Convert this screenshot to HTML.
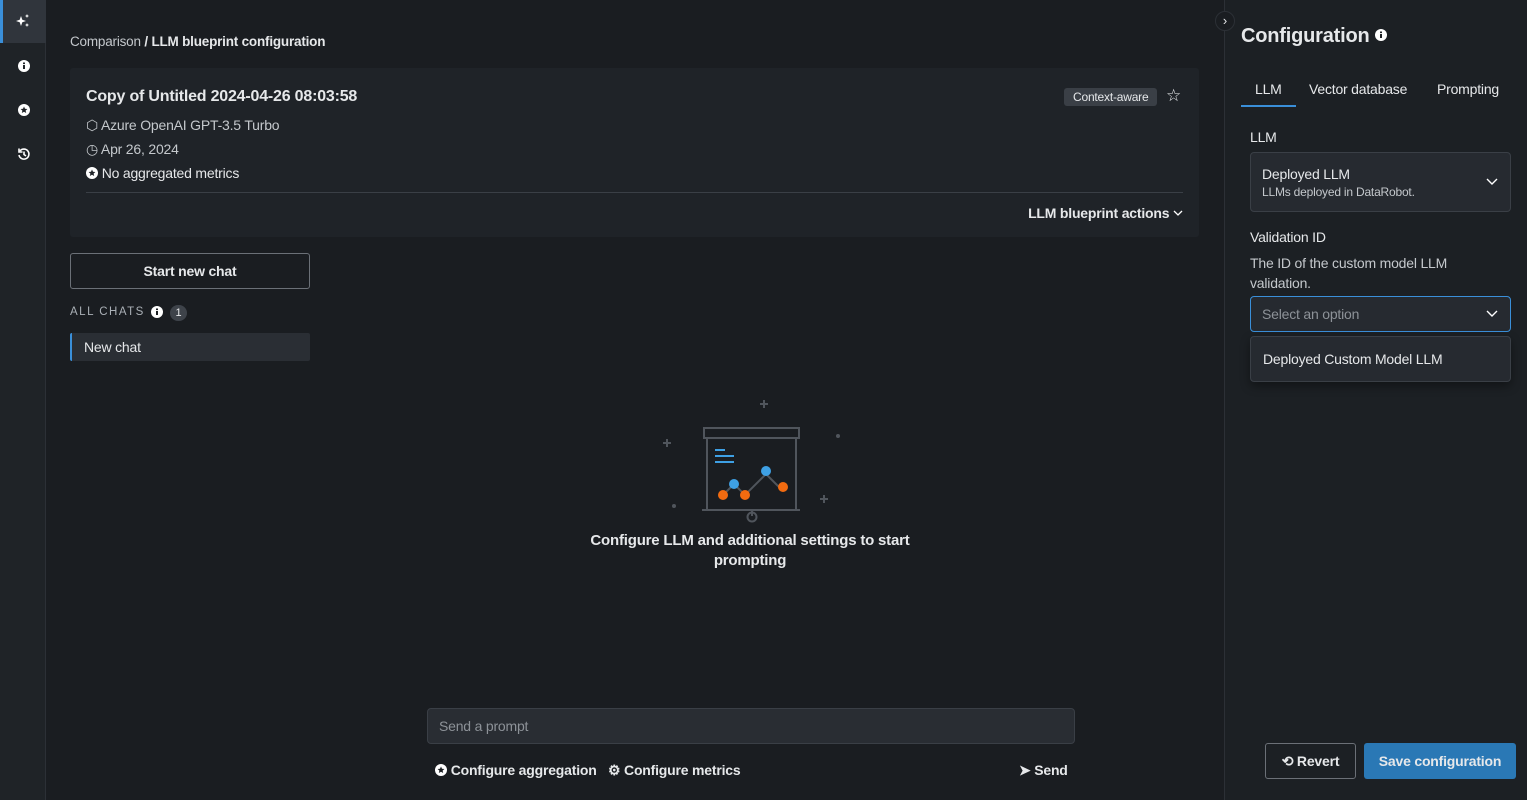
<!DOCTYPE html>
<html><head><style>
*{box-sizing:border-box;margin:0;padding:0}
body{width:1527px;height:800px;background:#1a1d21;font-family:"Liberation Sans",sans-serif;color:#e6e8ea;position:relative;overflow:hidden;font-size:14px;letter-spacing:-0.2px}
.abs{position:absolute}
.side{left:0;top:0;width:46px;height:800px;background:#1f2327;border-right:1px solid #2c3036}
.side .act{position:absolute;left:0;top:0;width:46px;height:43px;background:#30353c;border-left:3px solid #3a8fd9}
.b{font-weight:bold}
.card{left:70px;top:68px;width:1129px;height:169px;background:#1f2328;border-radius:3px}
.muted{color:#c4c8cc}
.right{left:1224px;top:0;width:303px;height:800px;background:#1c2024;border-left:1px solid #2c3036}
.box{border:1px solid #3a3f46;border-radius:4px;background:#262a30}
.chev{position:absolute;right:12px;top:50%;margin-top:-4px}
</style></head><body>
<div class="abs side"><div class="act"></div>
<svg class="abs" style="left:16px;top:14px" width="15" height="15" viewBox="0 0 15 15" fill="#fff"><path d="M5 2l1.3 3.7L10 7 6.3 8.3 5 12 3.7 8.3 0 7l3.7-1.3z"/><path d="M11 0l.6 1.4L13 2l-1.4.6L11 4l-.6-1.4L9 2l1.4-.6zM11 9l.6 1.4L13 11l-1.4.6L11 13l-.6-1.4L9 11l1.4-.6z"/></svg>
<svg class="abs" style="left:18px;top:60px" width="12" height="12"><circle cx="6" cy="6" r="6" fill="#fff"/><rect x="5" y="5" width="2" height="4" fill="#1f2327"/><rect x="5" y="2.5" width="2" height="1.6" fill="#1f2327"/></svg>
<svg class="abs" style="left:18px;top:104px" width="12" height="12"><circle cx="6" cy="6" r="6" fill="#fff"/><path d="M6 2.5l1 2.3 2.4.2-1.8 1.6.6 2.4L6 7.7 3.8 9l.6-2.4L2.6 5l2.4-.2z" fill="#1f2327"/></svg>
<svg class="abs" style="left:17px;top:147px" width="14" height="14" fill="none" stroke="#fff" stroke-width="1.6"><path d="M3 4a5 5 0 1 1-1 4"/><path d="M2 1.5v3.5h3.5"/><path d="M7 4.5v3l2 1.5"/></svg>
</div>

<div class="abs" style="left:70px;top:34px;font-size:13.5px"><span class="muted">Comparison</span> <span class="b">/ LLM blueprint configuration</span></div>

<div class="abs card">
<div class="abs b" style="left:16px;top:20px;font-size:16px">Copy of Untitled 2024-04-26 08:03:58</div>
<div class="abs muted" style="left:16px;top:49px">⬡ Azure OpenAI GPT-3.5 Turbo</div>
<div class="abs muted" style="left:16px;top:73px">◷ Apr 26, 2024</div>
<div class="abs" style="left:16px;top:97px"><svg width="12" height="12" style="vertical-align:-1px"><circle cx="6" cy="6" r="6" fill="#fff"/><path d="M6 2.5l1 2.3 2.4.2-1.8 1.6.6 2.4L6 7.7 3.8 9l.6-2.4L2.6 5l2.4-.2z" fill="#1f2328"/></svg> No aggregated metrics</div>
<div class="abs" style="left:994px;top:20px;background:#3a3f46;border-radius:3px;padding:2px 9px;font-size:12px">Context-aware</div>
<div class="abs" style="left:1096px;top:18px;font-size:17px">☆</div>
<div class="abs" style="left:16px;top:124px;width:1097px;height:1px;background:#3a3f46"></div>
<div class="abs b" style="right:16px;top:137px">LLM blueprint actions <svg width="10" height="6" style="vertical-align:2px"><path d="M1 1l4 4 4-4" fill="none" stroke="#fff" stroke-width="1.3"/></svg></div>
</div>

<div class="abs b" style="left:70px;top:253px;width:240px;height:36px;border:1px solid #6b7077;border-radius:3px;text-align:center;line-height:34px">Start new chat</div>
<div class="abs" style="left:70px;top:306px;font-size:11.5px;letter-spacing:1.5px;color:#aab0b6">ALL CHATS</div>
<svg class="abs" style="left:151px;top:306px" width="12" height="12"><circle cx="6" cy="6" r="6" fill="#fff"/><rect x="5" y="5" width="2" height="4" fill="#1a1d21"/><rect x="5" y="2.5" width="2" height="1.6" fill="#1a1d21"/></svg>
<div class="abs" style="left:170px;top:305px;width:17px;height:16px;border-radius:8px;background:#3e434a;font-size:11px;text-align:center;line-height:16px">1</div>
<div class="abs" style="left:70px;top:333px;width:240px;height:28px;background:#2a2e34;border-left:2px solid #3a8fd9;border-radius:2px;padding-left:12px;line-height:28px">New chat</div>

<svg class="abs" style="left:655px;top:395px" width="190" height="130">
<g fill="#50555c"><path d="M105 9h8M109 5v8" stroke="#50555c" stroke-width="2"/><path d="M8 48h8M12 44v8" stroke="#50555c" stroke-width="2"/><path d="M165 104h8M169 100v8" stroke="#50555c" stroke-width="2"/><circle cx="183" cy="41" r="2"/><circle cx="19" cy="111" r="2"/></g>
<g fill="none" stroke="#50555c" stroke-width="2"><rect x="49" y="33" width="95" height="10"/><path d="M52 43v72M141 43v72M47 115h98M97 115v6"/><circle cx="97" cy="122" r="4.5"/><path d="M68 100L79 89 90 100 111 79 128 96"/></g>
<g stroke="#3ea0e4" stroke-width="2"><path d="M60 55h10M60 61h19M60 67h19"/></g>
<circle cx="79" cy="89" r="5" fill="#3ea0e4"/><circle cx="111" cy="76" r="5" fill="#3ea0e4"/>
<circle cx="68" cy="100" r="5" fill="#f26b10"/><circle cx="90" cy="100" r="5" fill="#f26b10"/><circle cx="128" cy="92" r="5" fill="#f26b10"/>
</svg>
<div class="abs b" style="left:570px;top:531px;width:360px;text-align:center;font-size:15px;line-height:20px">Configure LLM and additional settings to start prompting</div>

<div class="abs box" style="left:427px;top:708px;width:648px;height:36px;background:#292d33;padding-left:11px;line-height:34px;color:#8d9298">Send a prompt</div>
<div class="abs b" style="left:435px;top:762px"><svg width="12" height="12" style="vertical-align:-1px"><circle cx="6" cy="6" r="6" fill="#fff"/><path d="M6 2.5l1 2.3 2.4.2-1.8 1.6.6 2.4L6 7.7 3.8 9l.6-2.4L2.6 5l2.4-.2z" fill="#1a1d21"/></svg> Configure aggregation</div>
<div class="abs b" style="left:608px;top:762px">⚙ Configure metrics</div>
<div class="abs b" style="left:1019px;top:762px">➤ Send</div>

<div class="abs right">
<div class="abs" style="left:-10px;top:11px;width:20px;height:20px;border-radius:50%;background:#1a1d21;border:1px solid #2c3036;text-align:center;line-height:17px;font-size:13px">›</div>
<div class="abs b" style="left:16px;top:25px;font-size:20px">Configuration <svg width="12" height="12" style="vertical-align:1px"><circle cx="6" cy="6" r="6" fill="#fff"/><rect x="5" y="5" width="2" height="4" fill="#1c2024"/><rect x="5" y="2.5" width="2" height="1.6" fill="#1c2024"/></svg></div>
<div class="abs" style="left:30px;top:81px">LLM</div>
<div class="abs" style="left:16px;top:105px;width:55px;height:2px;background:#3a8fd9"></div>
<div class="abs" style="left:84px;top:81px">Vector database</div>
<div class="abs" style="left:212px;top:81px">Prompting</div>
<div class="abs" style="left:25px;top:129px">LLM</div>
<div class="abs box" style="left:25px;top:152px;width:261px;height:60px">
<div class="abs" style="left:11px;top:13px">Deployed LLM</div>
<div class="abs muted" style="left:11px;top:32px;font-size:12px">LLMs deployed in DataRobot.</div>
<svg class="chev" width="12" height="7"><path d="M1 1l5 5 5-5" fill="none" stroke="#fff" stroke-width="1.4"/></svg></div>
<div class="abs" style="left:25px;top:229px">Validation ID</div>
<div class="abs muted" style="left:25px;top:253px;width:250px;line-height:20px">The ID of the custom model LLM validation.</div>
<div class="abs box" style="left:25px;top:296px;width:261px;height:36px;border-color:#3a8fd9;padding-left:11px;line-height:34px;color:#8d9298">Select an option<svg class="chev" width="12" height="7"><path d="M1 1l5 5 5-5" fill="none" stroke="#fff" stroke-width="1.4"/></svg></div>
<div class="abs box" style="left:25px;top:336px;width:261px;height:46px;padding-left:12px;line-height:44px;box-shadow:0 4px 10px rgba(0,0,0,.4)">Deployed Custom Model LLM</div>
<div class="abs b" style="left:40px;top:743px;width:91px;height:36px;border:1px solid #6b7077;border-radius:3px;text-align:center;line-height:34px">⟲ Revert</div>
<div class="abs b" style="left:139px;top:743px;width:152px;height:36px;background:#2a78b5;border-radius:3px;text-align:center;line-height:36px">Save configuration</div>
</div>
</body></html>
